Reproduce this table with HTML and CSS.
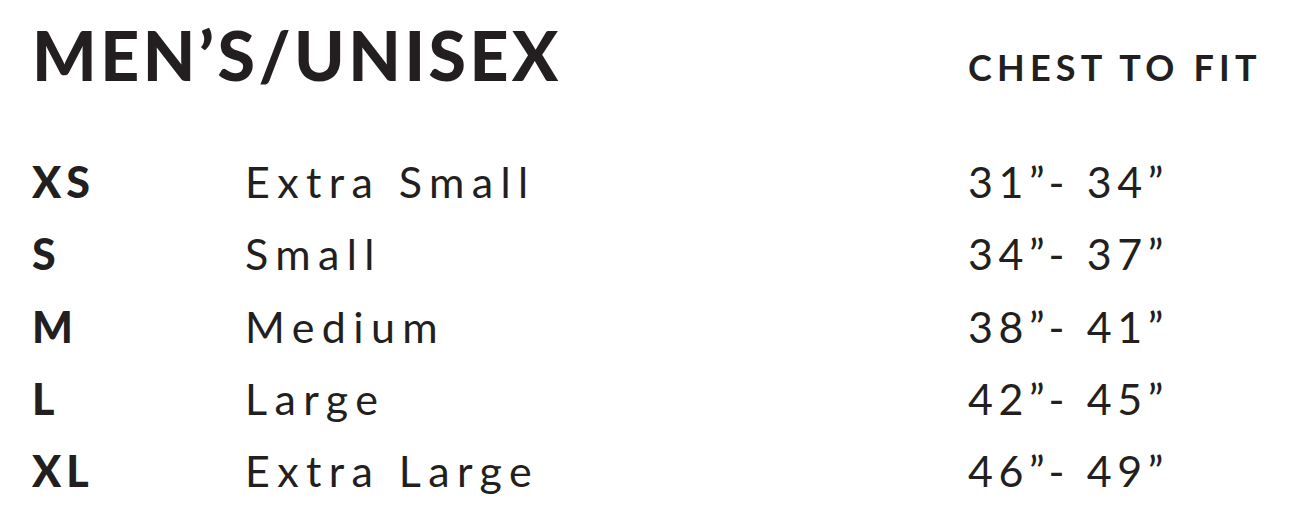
FILE: index.html
```html
<!DOCTYPE html>
<html>
<head>
<meta charset="utf-8">
<link rel="stylesheet" href="styles.css">
</head>
<body>
<div class="chart">
  <div class="head">
    <h1 class="title">MEN’S/UNISEX</h1>
    <div class="colhead">CHEST TO FIT</div>
  </div>
  <div class="rows">
    <div class="row"><span class="size">XS</span><span class="name">Extra Small</span><span class="range">31”- 34”</span></div>
    <div class="row"><span class="size">S</span><span class="name">Small</span><span class="range">34”- 37”</span></div>
    <div class="row"><span class="size">M</span><span class="name">Medium</span><span class="range">38”- 41”</span></div>
    <div class="row"><span class="size">L</span><span class="name">Large</span><span class="range">42”- 45”</span></div>
    <div class="row"><span class="size">XL</span><span class="name">Extra Large</span><span class="range">46”- 49”</span></div>
  </div>
</div>
</body>
</html>
```
FILE: styles.css
```css
html, body {
  margin: 0;
  padding: 0;
  background: #ffffff;
}
body {
  font-family: "Lato", "Liberation Sans", sans-serif;
  color: #231f20;
}
.chart {
  padding: 21px 0 0 32px;
}
.head {
  display: grid;
  grid-template-columns: 936px auto;
  align-items: baseline;
}
.title {
  margin: 0;
  font-size: 68px;
  font-weight: 900;
  line-height: 68px;
  letter-spacing: 3.5px;
}
.colhead {
  font-size: 36px;
  font-weight: 700;
  line-height: 36px;
  letter-spacing: 5.2px;
}
.rows {
  display: flex;
  flex-direction: column;
  padding-top: 57px;
}
.row {
  display: grid;
  grid-template-columns: 213px 723px auto;
  height: 72.25px;
  line-height: 72px;
}
.size {
  font-size: 43px;
  font-weight: 900;
  letter-spacing: 5px;
}
.name {
  font-size: 43px;
  font-weight: 400;
  letter-spacing: 7.4px;
}
.range {
  font-size: 43px;
  font-weight: 400;
  letter-spacing: 5.6px;
}
```
